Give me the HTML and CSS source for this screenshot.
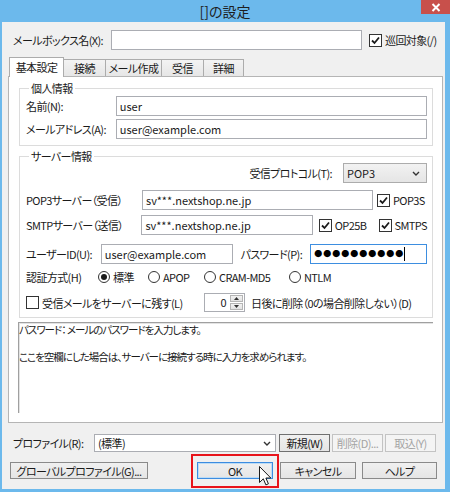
FILE: index.html
```html
<!DOCTYPE html>
<html lang="ja">
<head>
    <meta charset="UTF-8">
    <meta name="viewport" content="width=device-width, initial-scale=1.0">
    <title>[]の設定</title>
    <link rel="stylesheet" href="styles.css">
</head>
<body>
    <div class="window">
        <div class="titlebar">
            <span></span>
            <span class="title">[]の設定</span>
            <span class="close">
                <svg width="10" height="9" viewBox="0 0 10 9"><path d="M1.5 1 L8.5 8 M8.5 1 L1.5 8" stroke="#fff" stroke-width="2"/></svg>
            </span>
        </div>
        <div class="client">
            <div class="mailbox-row">
                <span class="mailbox-label">メールボックス名(X):</span>
                <span class="textbox mailbox-input"></span>
                <span class="check checked">
                    <svg width="11" height="11" viewBox="0 0 11 11"><path d="M2 5.5 L4.5 8 L9 2.5" fill="none" stroke="#1a1a1a" stroke-width="1.8"/></svg>
                </span>
                <span class="check-text">巡回対象(/)</span>
            </div>

            <div class="tabs">
                <span class="tab tab-select tab-w1">基本設定</span>
                <span class="tab tab-w2">接続</span>
                <span class="tab tab-w3">メール作成</span>
                <span class="tab tab-w2">受信</span>
                <span class="tab tab-w4">詳細</span>
            </div>

            <div class="panel">
                <fieldset class="group group-personal">
                    <legend>個人情報</legend>
                    <div class="row">
                        <span class="lbl-personal">名前(N):</span>
                        <span class="textbox w-personal">user</span>
                    </div>
                    <div class="row row-gap3">
                        <span class="lbl-personal">メールアドレス(A):</span>
                        <span class="textbox w-personal">user@example.com</span>
                    </div>
                </fieldset>

                <fieldset class="group group-server">
                    <legend>サーバー情報</legend>
                    <div class="row row-protocol">
                        <span class="lbl-protocol">受信プロトコル(T):</span>
                        <span class="select">
                            <span class="select-text">POP3</span>
                            <svg width="8" height="5" viewBox="0 0 8 5"><path d="M1 1 L4 4 L7 1" fill="none" stroke="#333" stroke-width="1.4"/></svg>
                        </span>
                    </div>
                    <div class="row row-pop">
                        <span class="lbl-server">POP3サーバー（受信）</span>
                        <span class="textbox w-pop">sv***.nextshop.ne.jp</span>
                        <span class="check checked ml4">
                            <svg width="11" height="11" viewBox="0 0 11 11"><path d="M2 5.5 L4.5 8 L9 2.5" fill="none" stroke="#1a1a1a" stroke-width="1.8"/></svg>
                        </span>
                        <span class="check-text">POP3S</span>
                    </div>
                    <div class="row row-smtp">
                        <span class="lbl-server">SMTPサーバー（送信）</span>
                        <span class="textbox w-smtp">sv***.nextshop.ne.jp</span>
                        <span class="check checked ml6">
                            <svg width="11" height="11" viewBox="0 0 11 11"><path d="M2 5.5 L4.5 8 L9 2.5" fill="none" stroke="#1a1a1a" stroke-width="1.8"/></svg>
                        </span>
                        <span class="check-text w-op25b">OP25B</span>
                        <span class="check checked">
                            <svg width="11" height="11" viewBox="0 0 11 11"><path d="M2 5.5 L4.5 8 L9 2.5" fill="none" stroke="#1a1a1a" stroke-width="1.8"/></svg>
                        </span>
                        <span class="check-text">SMTPS</span>
                    </div>
                    <div class="row row-user">
                        <span class="lbl-user">ユーザーID(U):</span>
                        <span class="textbox w-user">user@example.com</span>
                        <span class="lbl-pass">パスワード(P):</span>
                        <span class="textbox textbox-focus w-pass"><span class="dots">●●●●●●●●●●</span><span class="caret"></span></span>
                    </div>
                    <div class="row row-auth">
                        <span class="lbl-auth">認証方式(H)</span>
                        <span class="radio radio-on"></span><span class="radio-text w-std">標準</span>
                        <span class="radio"></span><span class="radio-text w-apop">APOP</span>
                        <span class="radio"></span><span class="radio-text w-cram">CRAM-MD5</span>
                        <span class="radio"></span><span class="radio-text">NTLM</span>
                    </div>
                    <div class="row row-leave">
                        <span class="check"></span>
                        <span class="check-text w-leave">受信メールをサーバーに残す(L)</span>
                        <span class="spinner">
                            <span class="spin-value">0</span>
                            <span class="spin-btns">
                                <span class="spin-btn"><svg width="5" height="3" viewBox="0 0 5 3"><path d="M0 3 L2.5 0 L5 3 Z" fill="#333"/></svg></span>
                                <span class="spin-btn"><svg width="5" height="3" viewBox="0 0 5 3"><path d="M0 0 L2.5 3 L5 0 Z" fill="#333"/></svg></span>
                            </span>
                        </span>
                        <span class="days-text">日後に削除（0の場合削除しない）(D)</span>
                    </div>
                </fieldset>

                <div class="desc">
                    <p>パスワード： メールのパスワードを入力します。</p>
                    <p>&nbsp;</p>
                    <p>ここを空欄にした場合は、サーバーに接続する時に入力を求められます。</p>
                </div>
            </div>

            <div class="profile-row">
                <span class="lbl-profile">プロファイル(R):</span>
                <span class="combo">
                    <span class="select-text">(標準)</span>
                    <svg width="8" height="5" viewBox="0 0 8 5"><path d="M1 1 L4 4 L7 1" fill="none" stroke="#333" stroke-width="1.4"/></svg>
                </span>
                <span class="btn btn-small">新規(W)</span>
                <span class="btn btn-small btn-off">削除(D)...</span>
                <span class="btn btn-small btn-off">取込(Y)</span>
            </div>

            <div class="button-row">
                <span class="btn btn-global">グローバルプロファイル(G)...</span>
                <span class="btn btn-default btn-ok">OK</span>
                <span class="btn btn-cancel">キャンセル</span>
                <span class="btn btn-help">ヘルプ</span>
            </div>

            <div class="highlight"></div>
            <svg class="cursor" width="13" height="20" viewBox="0 0 13 20">
                <path d="M0.5 0.5 L0.5 16.5 L4.3 12.8 L6.9 18.9 L9.4 17.8 L6.9 12 L11.8 12 Z" fill="#fff" stroke="#1a1a1a" stroke-width="1" stroke-linejoin="round"/>
            </svg>
        </div>
    </div>
</body>
</html>
```

FILE: styles.css
```css
body{
    margin: 0;
    font-family: "Noto Sans CJK JP", "Noto Sans", sans-serif;
    font-size: 11px;
    letter-spacing: -0.6px;
    color: #1a1a1a;
    font-feature-settings: "palt";
    white-space: nowrap;
}
.window{
    width: 450px;
    height: 492px;
    background-color: #6cb9ec;
    display: flex;
    flex-direction: column;
}
.titlebar{
    height: 22px;
    display: grid;
    grid-template-columns: 1fr auto 1fr;
}
.title{
    font-size: 14px;
    letter-spacing: 0;
    line-height: 23px;
    color: #1e1e1e;
}
.close{
    justify-self: end;
    width: 29px;
    height: 14px;
    background-color: #c8504b;
    display: flex;
    align-items: center;
    justify-content: center;
}
.client{
    position: relative;
    flex: 1;
    margin: 0 5px 3px 2px;
    background-color: #f0f0f0;
}

/* 共通パーツ */
.row{
    display: flex;
    align-items: center;
    height: 20px;
}
.textbox{
    box-sizing: border-box;
    height: 20px;
    border: 1px solid #abadb3;
    background-color: #fff;
    padding: 0 3px;
    line-height: 18px;
    letter-spacing: 0;
    overflow: hidden;
}
.textbox-focus{
    border-color: #3d8ee0;
    display: flex;
    align-items: center;
}
.check{
    box-sizing: border-box;
    width: 13px;
    height: 13px;
    border: 1px solid #333;
    background-color: #fff;
    display: flex;
    align-items: center;
    justify-content: center;
    flex-shrink: 0;
}
.check-text{
    margin-left: 3px;
}
.radio{
    box-sizing: border-box;
    width: 12px;
    height: 12px;
    border: 1px solid #333;
    border-radius: 50%;
    background-color: #fff;
    display: flex;
    align-items: center;
    justify-content: center;
    flex-shrink: 0;
}
.radio-on::after{
    content: "";
    width: 6px;
    height: 6px;
    border-radius: 50%;
    background-color: #1a1a1a;
}
.radio-text{
    margin-left: 3px;
}
.ml4{ margin-left: 4px; }
.ml6{ margin-left: 6px; }

/* メールボックス名 */
.mailbox-row{
    display: flex;
    align-items: center;
    height: 20px;
    margin: 8px 0 0 11px;
}
.mailbox-label{
    width: 98px;
}
.mailbox-input{
    width: 251px;
    margin-right: 7px;
}

/* タブ */
.tabs{
    display: flex;
    align-items: flex-end;
    height: 19px;
    margin: 7px 0 0 7px;
}
.tab{
    box-sizing: border-box;
    height: 17px;
    border: 1px solid #acacac;
    border-bottom: none;
    background: linear-gradient(#f3f3f3, #e6e6e6);
    margin-left: -1px;
    text-align: center;
    line-height: 16px;
}
.tab-select{
    position: relative;
    z-index: 1;
    height: 20px;
    margin-bottom: -1px;
    margin-left: 0;
    background: #fff;
    line-height: 19px;
}
.tab-w1{ width: 55px; }
.tab-w2{ width: 43px; }
.tab-w3{ width: 57px; }
.tab-w4{ width: 41px; }

.panel{
    box-sizing: border-box;
    width: 435px;
    height: 347px;
    margin-left: 6px;
    border: 1px solid #b5b5b5;
    background-color: #fff;
    padding: 0 9px 0 10px;
    display: flex;
    flex-direction: column;
}
.group{
    margin: 0;
    border: 1px solid #dcdcdc;
    padding: 0 5px 6px 6px;
    min-width: 0;
}
.group legend{
    line-height: 14px;
    padding: 0 2px;
    margin-left: 3px;
}
.group-personal{
    margin-top: 4px;
    padding-top: 1px;
}
.row-gap3{ margin-top: 3px; }
.lbl-personal{ width: 90px; }
.w-personal{ width: 312px; }

.group-server{
    margin-top: 3px;
    padding-bottom: 5px;
}
.row-protocol{
    justify-content: flex-end;
}
.lbl-protocol{
    margin-right: 11px;
}
.select{
    box-sizing: border-box;
    width: 84px;
    height: 20px;
    border: 1px solid #acacac;
    background: linear-gradient(#f2f2f2, #e5e5e5);
    display: flex;
    align-items: center;
    justify-content: space-between;
    padding: 0 6px 0 3px;
    letter-spacing: 0;
}
.lbl-server{ width: 116px; }
.row-pop{ margin-top: 7px; }
.row-smtp{ margin-top: 5px; }
.w-pop{ width: 231px; }
.w-smtp{ width: 172px; }
.w-op25b{ width: 44px; }
.row-user{ margin-top: 9px; }
.lbl-user{ width: 75px; }
.w-user{ width: 133px; }
.lbl-pass{ width: 70px; margin-left: 7px; }
.w-pass{ width: 117px; }
.dots{
    font-size: 8px;
    letter-spacing: 1px;
    font-feature-settings: normal;
    color: #000;
}
.caret{
    width: 1px;
    height: 14px;
    background-color: #000;
}
.row-auth{
    margin-top: 5px;
    height: 16px;
}
.lbl-auth{ width: 72px; }
.w-std{ width: 35px; }
.w-apop{ width: 41px; }
.w-cram{ width: 70px; }
.row-leave{
    margin-top: 8px;
    height: 19px;
}
.w-leave{ width: 162px; }
.spinner{
    box-sizing: border-box;
    width: 41px;
    height: 19px;
    border: 1px solid #abadb3;
    background-color: #fff;
    display: flex;
}
.spin-value{
    flex: 1;
    text-align: right;
    padding-right: 4px;
    line-height: 17px;
}
.spin-btns{
    width: 13px;
    display: flex;
    flex-direction: column;
    gap: 1px;
    padding: 1px 1px 1px 0;
}
.spin-btn{
    flex: 1;
    border: 1px solid #b5b5b5;
    background: linear-gradient(#f2f2f2, #e2e2e2);
    display: flex;
    align-items: center;
    justify-content: center;
}
.days-text{
    margin-left: 6px;
}

.desc{
    height: 90px;
    margin-top: 4px;
    margin-left: -1px;
    border-top: 1px solid #a0a0a0;
    border-left: 1px solid #a0a0a0;
    box-shadow: inset 1px 1px 0 #e3e3e3;
    font-size: 10.5px;
    letter-spacing: -1px;
    line-height: 13.5px;
}
.desc p{
    margin: 0;
}

/* プロファイル */
.profile-row{
    display: flex;
    align-items: center;
    height: 18px;
    margin: 11px 0 0 11px;
}
.lbl-profile{ width: 81px; }
.combo{
    box-sizing: border-box;
    width: 182px;
    height: 18px;
    border: 1px solid #abadb3;
    background-color: #fff;
    display: flex;
    align-items: center;
    justify-content: space-between;
    padding: 0 4px 0 3px;
    margin-right: 3px;
}
.btn{
    box-sizing: border-box;
    border: 1px solid #acacac;
    background: linear-gradient(#f0f0f0, #e5e5e5);
    display: flex;
    align-items: center;
    justify-content: center;
}
.btn-small{
    width: 51px;
    height: 18px;
    margin-right: 2px;
    border-color: #707070;
}
.btn-off{
    border-color: #c3c3c3;
    background: #f4f4f4;
    color: #a3a3a3;
}
.button-row{
    display: flex;
    height: 17px;
    margin: 10px 0 0 8px;
}
.button-row .btn{
    height: 17px;
    border-color: #8a8a8a;
}
.btn-global{ width: 138px; margin-right: 49px; }
.btn-ok{ width: 76px; margin-right: 7px; }
.btn-cancel{ width: 76px; margin-right: 6px; }
.btn-help{ width: 75px; }
.button-row .btn-default{
    border-color: #3c8ce0;
    box-shadow: inset 0 0 0 1px #bcdcf6;
}

.highlight{
    position: absolute;
    left: 189px;
    top: 432px;
    width: 84px;
    height: 30px;
    border: 2px solid #e8141b;
}
.cursor{
    position: absolute;
    left: 257px;
    top: 444px;
}
```
